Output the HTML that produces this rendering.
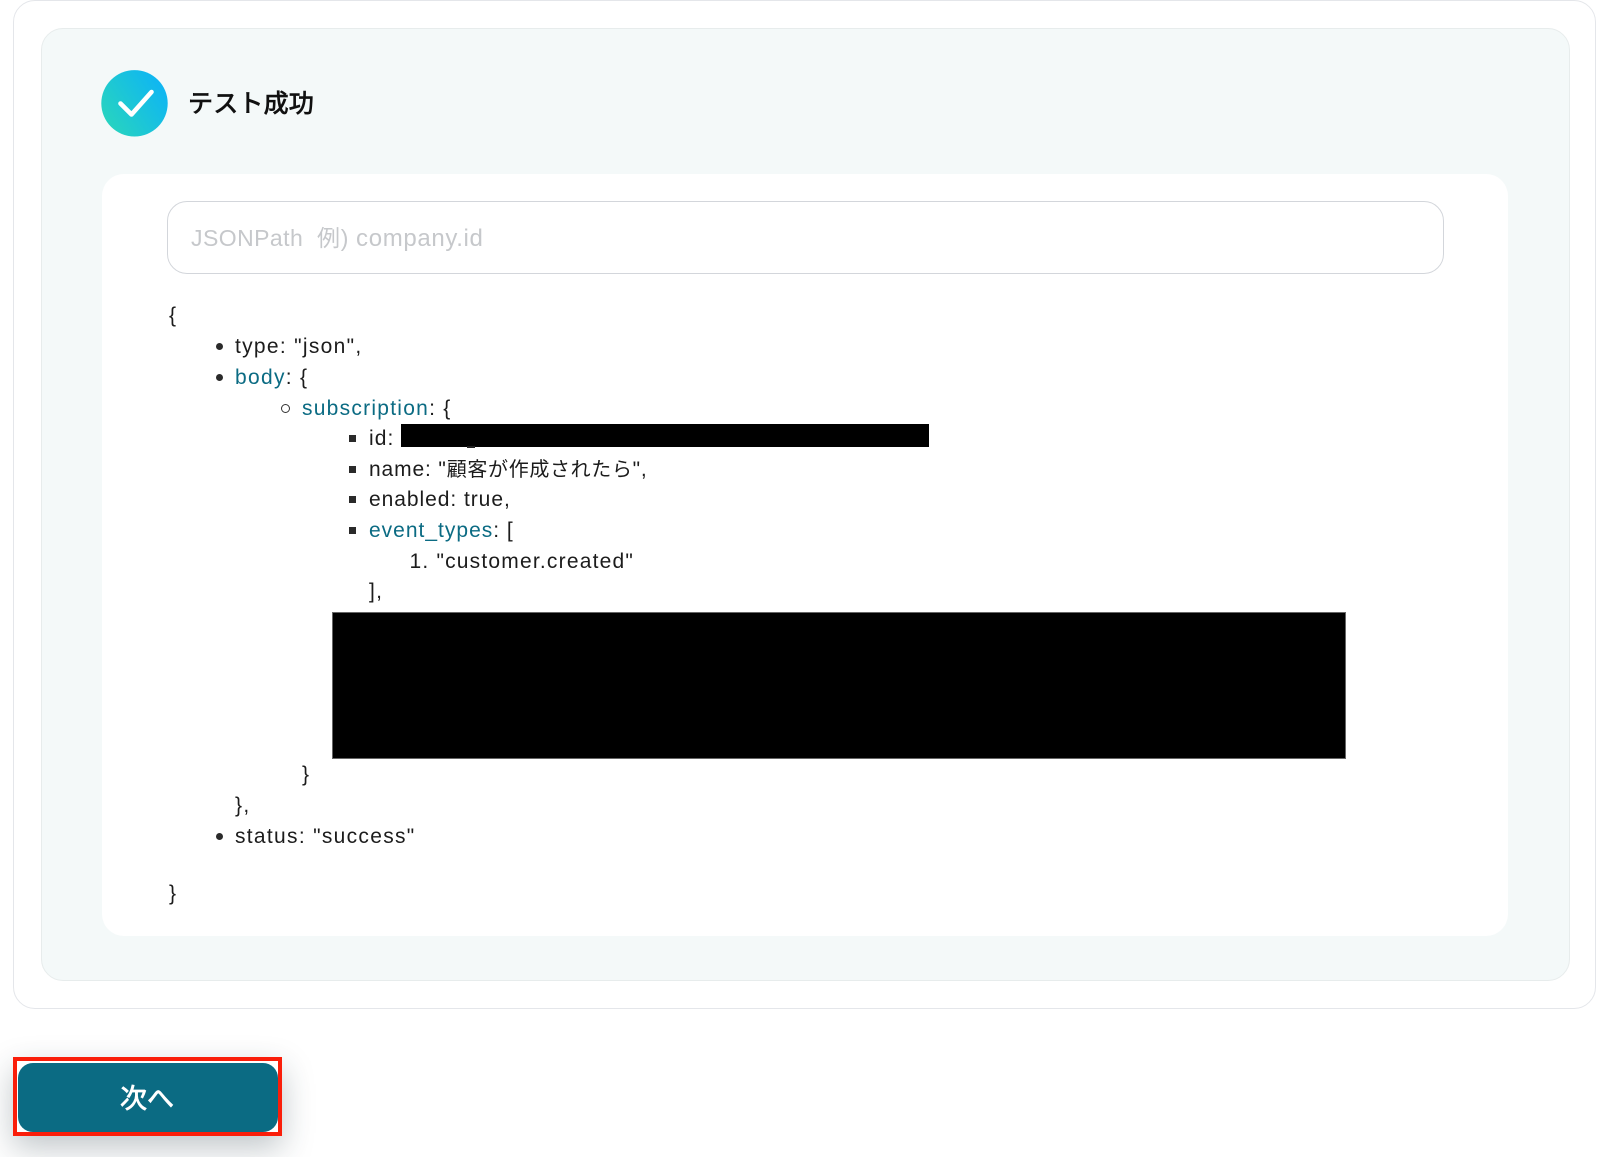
<!DOCTYPE html>
<html lang="ja">
<head>
<meta charset="utf-8">
<title>テスト成功</title>
<style>
html,body{margin:0;padding:0;background:#fff;}
body{position:relative;width:1600px;height:1157px;overflow:hidden;font-family:"Liberation Sans","Noto Sans CJK JP",sans-serif;color:#1c1c1c;}
div,svg{position:absolute;box-sizing:border-box;}
.t{font-size:21px;line-height:30px;height:30px;white-space:nowrap;letter-spacing:1.3px;}
.j{font-size:20px;letter-spacing:.65px;}
.l{color:#0b6b83;}
.d{width:7px;height:7px;border-radius:50%;background:#2a2a2a;left:216px;}
.s{width:7px;height:7px;background:#2a2a2a;left:349px;}
</style>
</head>
<body>
<div style="left:13px;top:0;width:1583px;height:1009px;border:1.5px solid #e4e6ea;border-radius:22px;background:#fff;"></div>
<div style="left:41px;top:28px;width:1529px;height:953px;border:1px solid #e7ecec;border-radius:22px;background:#f4f9f9;"></div>
<div style="left:102px;top:174px;width:1406px;height:762px;border-radius:22px;background:#fff;"></div>

<svg style="left:101px;top:70px;" width="67" height="67" viewBox="0 0 67 67">
<defs><linearGradient id="g" x1="0" y1="1" x2="1" y2="0.35"><stop offset="0" stop-color="#2bd8b8"/><stop offset="1" stop-color="#0fb6f2"/></linearGradient></defs>
<circle cx="33.5" cy="33.3" r="33.2" fill="url(#g)"/>
<path d="M19.5 33.5 L30.5 44.5 L50.5 22" fill="none" stroke="#fff" stroke-width="4.6" stroke-linecap="round" stroke-linejoin="round"/>
</svg>
<div style="left:188px;top:86px;font-size:25px;line-height:36px;color:#111;white-space:nowrap;letter-spacing:.2px;-webkit-text-stroke:.8px #111;">テスト成功</div>

<div style="left:167px;top:201px;width:1277px;height:73px;border:1px solid #d3d6db;border-radius:20px;background:#fff;"></div>
<div style="left:191px;top:222px;font-size:23px;line-height:32px;color:#c6c8cb;white-space:nowrap;letter-spacing:.45px;">JSONPath&nbsp; <span style="letter-spacing:.8px;">例)</span> <span style="font-size:24px;letter-spacing:.65px;">company.id</span></div>

<div class="t" style="left:169px;top:301px;">{</div>
<div class="d" style="top:343px;"></div>
<div class="t" style="left:235px;top:332px;">type: "json",</div>
<div class="d" style="top:374px;"></div>
<div class="t" style="left:235px;top:363px;"><span class="l">body</span>: {</div>
<div style="left:281px;top:404px;width:9px;height:9px;border:1.4px solid #333;border-radius:50%;"></div>
<div class="t" style="left:302px;top:393.5px;letter-spacing:1.25px;"><span class="l">subscription</span>: {</div>
<div class="s" style="top:435px;"></div>
<div class="t" style="left:369px;top:424px;letter-spacing:1.1px;">id:</div>
<div style="left:401px;top:424px;width:528px;height:23px;background:#000;"></div>
<div style="left:467px;top:446px;width:8px;height:2px;background:#222;"></div>
<div class="s" style="top:466px;"></div>
<div class="t" style="left:369px;top:455px;letter-spacing:.87px;">name: "<span class="j">顧客が作成されたら</span>",</div>
<div class="s" style="top:496px;"></div>
<div class="t" style="left:369px;top:485px;letter-spacing:.95px;">enabled: true,</div>
<div class="s" style="top:527px;"></div>
<div class="t" style="left:369px;top:515.5px;letter-spacing:1px;"><span class="l">event_types</span>: [</div>
<div class="t" style="left:409.5px;top:547px;letter-spacing:1.2px;">1. "customer.created"</div>
<div class="t" style="left:369px;top:577px;">],</div>
<div style="left:332px;top:612px;width:1014px;height:147px;background:#000;border:1px solid #666;"></div>
<div class="t" style="left:302px;top:760px;">}</div>
<div class="t" style="left:235px;top:791px;">},</div>
<div class="d" style="top:833px;"></div>
<div class="t" style="left:235px;top:822px;">status: "success"</div>
<div class="t" style="left:169px;top:879px;">}</div>

<div style="left:13px;top:1057px;width:269px;height:79px;background:#fff;border:4.5px solid #fa1e0a;box-shadow:0 12px 32px rgba(30,50,60,.28);"></div>
<div style="left:18px;top:1063px;width:260px;height:69px;background:#0b6b83;border-radius:15px;"></div>
<div style="left:17px;top:1080px;width:260px;height:38px;text-align:center;color:#fff;font-size:27px;line-height:38px;-webkit-text-stroke:.8px #fff;">次へ</div>
</body>
</html>
